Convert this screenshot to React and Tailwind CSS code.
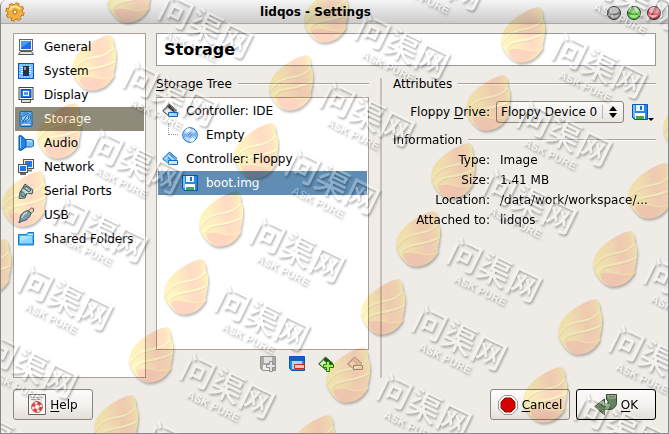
import React from "react";

function Icon({ children, className = "h-4 w-4", viewBox = "0 0 16 16" }) {
  return (
    <svg className={`shrink-0 ${className}`} viewBox={viewBox} fill="none" aria-hidden="true">
      {children}
    </svg>
  );
}

const GeneralIcon = () => (
  <Icon>
    <rect x="1.5" y=".5" width="13" height="11" fill="#f5f5f5" stroke="#666" />
    <rect x="3" y="2" width="10" height="8" fill="#1c6fe0" />
    <path d="M3 2h10L3 9z" fill="#4b98f0" />
    <path d="M2.5 12.5h11l2 3H.5z" fill="#e3e3e3" stroke="#555" />
  </Icon>
);
const SystemIcon = () => (
  <Icon>
    <rect x=".5" y=".5" width="15" height="15" fill="#5fb3fb" stroke="#0d55b0" />
    <path d="M2 2h12v12H2z" fill="none" stroke="#b9e2ff" strokeDasharray="2 1" />
    <path d="M5 3h6v10H5z" fill="#273246" />
    <path d="M3 4.5h2M3 6.5h2M3 8.5h2M3 10.5h2M11 4.5h2M11 6.5h2M11 8.5h2M11 10.5h2" stroke="#fff" />
    <path d="M6 4h2v3H6z" fill="#8798b8" />
  </Icon>
);
const DisplayIcon = () => (
  <Icon>
    <rect x="1" y=".5" width="14" height="12" fill="#fff" stroke="#444" />
    <rect x="3" y="2.5" width="10" height="8" fill="#2775e5" stroke="#0d4fb0" />
    <rect x="5.5" y="4.5" width="5" height="4" fill="#4b9cf5" stroke="#fff" />
    <path d="M3.5 13v2.5h9V13" fill="#ddd" stroke="#555" />
  </Icon>
);
const StorageIcon = () => (
  <Icon>
    <rect x="2" y=".5" width="12" height="15" rx="1" fill="#5eacf0" stroke="#1c5fa6" />
    <circle cx="8" cy="6.5" r="4.5" fill="#9bd2ff" stroke="#2670ba" />
    <path d="M8.5 5 4 12.5M5 6c0-3 6-3 6 0s-3 3-4 4" stroke="#174f8e" />
    <path d="M4 13.5h8" stroke="#d7efff" />
  </Icon>
);
const AudioIcon = () => (
  <Icon>
    <path d="M1 .8h2.5L8 5v7l-4.5 3.2H1z" fill="#2383e8" stroke="#0a4c9b" />
    <path d="M2.5 2v11" stroke="#8bd0ff" />
    <path d="M8 4.5h5.5l2 1v5.5l-2 1H8z" fill="#77bffb" stroke="#2469af" />
    <path d="M9 6h5" stroke="#e0f4ff" />
  </Icon>
);
const NetworkIcon = () => (
  <Icon>
    <rect x="5.5" y=".5" width="10" height="9" fill="#eee" stroke="#555" />
    <rect x="7" y="2" width="7" height="6" fill="#2378e8" />
    <path d="M10 11.5h4" stroke="#777" strokeWidth="2" />
    <rect x=".5" y="5.5" width="9" height="8" fill="#eee" stroke="#555" />
    <rect x="2" y="7" width="6" height="5" fill="#2378e8" />
    <path d="M2 15h6" stroke="#666" strokeWidth="2" />
  </Icon>
);
const SerialIcon = () => (
  <Icon>
    <path d="m7 1 8 6-1 4-5-1-2 5-6 .5L2 9z" fill="#bdddf2" stroke="#3c617d" />
    <path d="m8 3 5 4-2 2-6-4zM3 8l5 4-3 2-2-1z" fill="#7cbbe6" stroke="#326b99" />
    <path d="m6 7 4 3M8 5l4 3" stroke="#f4fbff" />
  </Icon>
);
const UsbIcon = () => (
  <Icon>
    <path d="m10.5 3.5 3-2.5 2 .5v2.5L13 6.5z" fill="#eee" stroke="#666" />
    <path d="M2 13c-.5-5 3-8.5 8-9.5l3 3c-2 5-5 7.5-9 7.5L2 15.5H.8z" fill="#79b6e6" stroke="#39658b" />
    <path d="M4 11c1-3 3-5 5-5.5" stroke="#d8f0ff" strokeWidth="1.5" />
  </Icon>
);
const FolderIcon = () => (
  <Icon>
    <path d="M.5 14V3.5h8l1.5-2h5.5V14z" fill="#4fb5fa" stroke="#1478cf" />
    <path d="M2 5h12v7H2z" fill="#8dd6ff" />
    <path d="M2 5h12L2 11z" fill="#aae4ff" />
    <path d="M10 3.5h5" stroke="#e1f7ff" />
  </Icon>
);

function ControllerIcon({ dark, light, edge, mark, faded }) {
  return (
    <Icon className={faded ? "h-4 w-4 opacity-60" : "h-4 w-4"}>
      <path d="M7.5 1 15 7.5 8 14 .7 8z" fill={light} stroke={dark} />
      <path d="m7.5 1.5 7 6-3 1.5-6-5z" fill={faded ? light : dark} />
      <path d="m2.5 8 3-3 3 3-3 3z" fill="#fff" opacity=".75" />
      {mark === "plus" ? (
        <path d="M8.5 5.5h3v3h4v3h-4v4h-3v-4h-3v-3h3z" fill="#a4f060" stroke="#227a0a" />
      ) : (
        <path d="M6.5 9.5h9v4h-9z" fill={mark} stroke={edge} />
      )}
    </Icon>
  );
}

function FloppyIcon({ variant = "save" }) {
  if (variant === "add") {
    return (
      <Icon>
        <path d="M.5.5h15v14H2.5l-2-2z" fill="#a9a9a9" stroke="#959595" />
        <path d="M4 1h8v6H4z" fill="#e2e2e2" />
        <path d="M3 9h6v5H3z" fill="#eee" />
        <path d="M9.5 5.5h3v3h3v3h-3v4h-3v-4h-3v-3h3z" fill="#e4e4e4" stroke="#8f8f8f" />
      </Icon>
    );
  }
  if (variant === "remove") {
    return (
      <Icon>
        <path d="M.5.5h15v14H2.5l-2-2z" fill="#2586e8" stroke="#0c55ad" />
        <path d="M1 1h14v4H1z" fill="#1260be" />
        <path d="M3 5h10v8H3z" fill="#a4dcff" />
        <path d="M5.5 8.5h10v4h-10z" fill="#ffc6a4" stroke="#c92b16" />
      </Icon>
    );
  }
  return (
    <Icon>
      <path d="M.5.5h15v15h-13l-2-2z" fill="#2586e8" stroke="#0c55ad" />
      <path d="M1 1h2v12H1z" fill="#74bfff" />
      <path d="M4 1h8v6H4z" fill="#e9f5ff" />
      <path d="M8 2h2v4H8z" fill="#1c70c8" />
      <path d="M3 9h10v6H3z" fill="#fff" />
      <path d="M4 12h8v3H4z" fill="#45ad35" />
    </Icon>
  );
}

const DiscIcon = () => (
  <Icon>
    <circle cx="8" cy="8" r="7.3" fill="#b9dcff" stroke="#1766bb" />
    <path d="M8 8 3 3a7 7 0 0 1 5-2zM8 8l5 5a7 7 0 0 1-5 2z" fill="#f3f8ff" />
    <path d="M8 8 14 5v5zM8 8 2 6v5z" fill="#75b8f5" />
    <circle cx="8" cy="8" r="3" fill="#c9c0f5" stroke="#6bbdee" />
    <circle cx="8" cy="8" r="1.3" fill="#fff" stroke="#3472c0" />
  </Icon>
);

const IdeIcon = () => <ControllerIcon dark="#444" light="#c8c8c8" edge="#1267b8" mark="#a4dcff" />;
const FloppyControllerIcon = () => (
  <Icon>
    <path d="M7.5 1 15 7.5 8 14 .7 8z" fill="#85c8f6" stroke="#1768b8" />
    <path d="m7.5 3 5 4.5M5 5.5l5 4.5" stroke="#1768b8" />
    <path d="m6.5 4.500 5 4M3 8l3-2.500" stroke="#e6f6ff" />
    <path d="M6.5 9.500h9v4h-9z" fill="#c4eaff" stroke="#1768b8" />
  </Icon>
);

const categories = [
  ["General", GeneralIcon],
  ["System", SystemIcon],
  ["Display", DisplayIcon],
  ["Storage", StorageIcon],
  ["Audio", AudioIcon],
  ["Network", NetworkIcon],
  ["Serial Ports", SerialIcon],
  ["USB", UsbIcon],
  ["Shared Folders", FolderIcon],
];

function GroupTitle({ children }) {
  return (
    <h2 className="flex h-5 items-center gap-1.5 whitespace-nowrap">
      <span>{children}</span>
      <span className="h-0.5 flex-1 border-t border-[#aaa39e] bg-white" />
    </h2>
  );
}

function TreeRow({ icon: RowIcon, label, child, selected }) {
  return (
    <li role="treeitem" aria-level={child ? 2 : 1} aria-selected={!!selected}>
      <div className={`flex h-6 items-center gap-2 pl-1 ${selected ? "bg-[#618db4] text-white" : ""}`}>
        {child && (
          <span className="-mr-1 ml-1.5 h-3 w-2.5 self-start border-b border-l border-dotted border-[#999]" />
        )}
        <RowIcon />
        <span>{label}</span>
      </div>
    </li>
  );
}

function DialogButton({ children, isDefault }) {
  return (
    <button
      type="button"
      className={`flex h-[31px] w-20 items-center justify-center gap-1 rounded-[3px] border bg-linear-to-b from-[#fcfbfa] via-[#f4f2ef] to-[#e4dfd9] ${
        isDefault ? "border-black" : "border-[#8c8782]"
      }`}
    >
      {children}
    </button>
  );
}

const windowButtons = [
  ["Minimize", "#7c7c7c", "#c5c5c5"],
  ["Maximize", "#45b82a", "#a2ec86"],
  ["Close", "#d03b48", "#f59a9a"],
];

function TitleBar() {
  return (
    <header className="flex h-6 shrink-0 items-center rounded-t-md border-b border-[#aaa] bg-linear-to-b from-[#f5f5f5] to-[#cbcbcb] px-1">
      <Icon className="h-5 w-5" viewBox="0 0 20 20">
        <circle cx="10" cy="10" r="7.5" stroke="#a96808" strokeWidth="4" strokeDasharray="3.4 2.5" />
        <circle cx="10" cy="10" r="7.500" fill="#f0b040" stroke="#b87410" />
        <circle cx="10" cy="10" r="7.5" stroke="#f0b040" strokeWidth="2.500" strokeDasharray="3 2.9" />
        <path d="M5 8c1-4 7-5 10-1" stroke="#ffe5a3" strokeWidth="2" />
        <circle cx="10" cy="10" r="2" fill="#fff5db" stroke="#a56a17" />
      </Icon>
      <h1 className="flex-1 text-center font-bold">lidqos - Settings</h1>
      <div className="flex justify-end gap-1 pr-0.5 pt-0.5">
        {windowButtons.map(([label, dark, light]) => (
          <button key={label} type="button" aria-label={label}>
            <Icon viewBox="0 0 16 16">
              <circle cx="8" cy="8" r="6.6" fill={dark} stroke="#444" />
              <path d="M3 9.5c3 1 7 1 10 0a5.4 5.4 0 0 1-10 0z" fill={light} />
              <ellipse cx="8" cy="5.2" rx="4.8" ry="3.2" fill="#fff" opacity=".5" />
            </Icon>
          </button>
        ))}
      </div>
    </header>
  );
}

const marks = [];
for (let col = -1; col <= 3; col++) {
  for (let row = -7; row <= 6; row++) {
    const x = 185 + col * 197 - row * 35;
    const y = 288 + col * 20 + row * 68;
    if (x > -150 && x < 700 && y > -90 && y < 470) marks.push([x, y]);
  }
}

function Tiled({ href }) {
  return marks.map(([x, y]) => <use key={`${x},${y}`} href={href} x={x} y={y} />);
}

function Watermark() {
  return (
    <>
      <svg className="pointer-events-none absolute inset-0 h-full w-full mix-blend-multiply" aria-hidden="true">
        <defs>
          <linearGradient id="flame" x1="0" y1=".6" x2="1" y2=".4">
            <stop offset="0" stopColor="#ffe94a" />
            <stop offset=".3" stopColor="#ffd556" />
            <stop offset=".65" stopColor="#ffa066" />
            <stop offset=".88" stopColor="#ffb860" />
            <stop offset="1" stopColor="#ffe840" />
          </linearGradient>
          <linearGradient id="ember" x1="0" y1=".3" x2="1" y2=".6">
            <stop offset="0" stopColor="#ff9560" />
            <stop offset=".6" stopColor="#f8915c" />
            <stop offset="1" stopColor="#ffd048" />
          </linearGradient>
          <filter id="soft" x="-20%" y="-20%" width="150%" height="150%">
            <feGaussianBlur stdDeviation="1" />
          </filter>
          <path
            id="shape"
            d="M16-29C6-28-10-18-17-9-23-1-23 8-19 14-14 22-9 26-3 26.5 8 27 16 20 20 12 19 8 22 2 21.5-1.5 23-8 22-14 20-17 20-23 19-26 16-29z"
          />
          <g id="letters" transform="translate(76 31) rotate(26)" textAnchor="middle">
            <text y="11" className="font-['Noto_Sans_CJK_SC',sans-serif] text-[33px] font-medium">
              问渠网
            </text>
            <text x="-4" y="27" className="font-['Liberation_Sans',sans-serif] text-[11px] font-bold">
              ASK PURE
            </text>
          </g>
          <mask id="outside" maskUnits="userSpaceOnUse" x="-30" y="-35" width="190" height="140">
            <path d="M-30-35h190v140H-30z" fill="#fff" />
            <use href="#shape" fill="#000" />
            <use href="#letters" fill="#000" />
          </mask>
          <g id="mark">
            <g mask="url(#outside)">
              <use href="#shape" x="1" y="2" fill="#555" opacity=".4" filter="url(#soft)" />
              <use href="#letters" x="1" y="2" fill="#444" opacity=".4" filter="url(#soft)" />
            </g>
            <g opacity=".38">
              <use href="#shape" fill="url(#flame)" />
              <path d="M-15 14C-10 11-4 12 4 14 11 15 17 14 20 12 16 20 8 27-3 26.5-9 26-14 20-15 14z" fill="url(#ember)" />
              <path d="M-21 8C-16-3-8-5 2-7 10-8 17-12 20-17M-18 13C-16 5-5 5 5 3 13 1 19-1 21.5-3" stroke="#fff27a" strokeWidth="2" fill="none" />
              <path d="M-21 9.5C-16-1-8-4 2-5.5 10-7 17-11 20.5-15M-15 14C-12 7-5 7 5 5 13 3 18 1 21-1" stroke="#c07848" strokeWidth=".8" fill="none" opacity=".7" />
              <path d="M-15 14C-10 11-4 12 4 14 11 15 17 14 20 12" stroke="#ffe650" strokeWidth="1" fill="none" />
            </g>
          </g>
        </defs>
        <Tiled href="#mark" />
      </svg>
      <svg
        className="pointer-events-none absolute inset-0 h-full w-full fill-white opacity-70 mix-blend-soft-light"
        aria-hidden="true"
      >
        <Tiled href="#letters" />
      </svg>
    </>
  );
}

const details = [
  ["Type:", "Image"],
  ["Size:", "1.41 MB"],
  ["Location:", "/data/work/workspace/..."],
  ["Attached to:", "lidqos"],
];

export default function App() {
  return (
    <div className="relative isolate flex min-h-screen flex-col overflow-hidden rounded-t-md border-x border-b border-[#888] bg-[#efebe7] font-['DejaVu_Sans',sans-serif] text-xs text-black">
      <TitleBar />
      <div className="flex flex-1 gap-2.5 px-3 pt-[9px]">
        <nav className="w-[133px] shrink-0 border border-[#aaa19a] bg-white p-px">
          <ul>
            {categories.map(([label, CategoryIcon]) => {
              const active = label === "Storage";
              return (
                <li key={label}>
                  <button
                    type="button"
                    aria-current={active ? "page" : undefined}
                    className={`flex h-6 w-full items-center gap-2.5 whitespace-nowrap pl-[3px] ${
                      active ? "bg-[#8f8b7b] text-white" : ""
                    }`}
                  >
                    <CategoryIcon />
                    {label}
                  </button>
                </li>
              );
            })}
          </ul>
        </nav>

        <main className="flex min-w-0 flex-1 flex-col">
          <div className="flex h-[33px] items-center border border-[#999] bg-white px-[7px] text-base font-bold">
            Storage
          </div>
          <div className="mt-2 grid flex-1 grid-cols-[213fr_2px_263fr] gap-x-[11px]">
            <section className="flex min-w-0 flex-col">
              <GroupTitle>
                <u className="underline-offset-2">S</u>torage Tree
              </GroupTitle>
              <ul role="tree" aria-label="Storage Tree" className="mt-[3px] flex-1 border border-[#aaa19a] bg-white p-px">
                <TreeRow icon={IdeIcon} label="Controller: IDE" />
                <TreeRow icon={DiscIcon} label="Empty" child />
                <TreeRow icon={FloppyControllerIcon} label="Controller: Floppy" />
                <TreeRow icon={FloppyIcon} label="boot.img" child selected />
              </ul>
              <div className="flex h-7 items-center justify-end gap-[13px] pr-1.5">
                <button type="button" aria-label="Add attachment" disabled>
                  <FloppyIcon variant="add" />
                </button>
                <button type="button" aria-label="Remove attachment">
                  <FloppyIcon variant="remove" />
                </button>
                <button type="button" aria-label="Add controller">
                  <ControllerIcon dark="#28481b" light="#8edb62" mark="plus" />
                </button>
                <button type="button" aria-label="Remove controller" disabled>
                  <ControllerIcon dark="#6f5f56" light="#cfc2b8" edge="#6f5f56" mark="#f1e9e2" faded />
                </button>
              </div>
            </section>
            <div className="mt-1 border-l-2 border-[#c5c0bb]" />
            <section className="min-w-0">
              <GroupTitle>Attributes</GroupTitle>
              <div className="mt-[7px] grid grid-cols-[97px_1fr_26px] items-center gap-x-1.5">
                <label htmlFor="drive" className="whitespace-nowrap text-right">
                  Floppy <u className="underline-offset-2">D</u>rive:
                </label>
                <div className="relative">
                  <select
                    id="drive"
                    className="block h-[22px] w-full appearance-none rounded-[3px] border border-[#8c8782] bg-linear-to-b from-[#fcfbfa] to-[#e8e4df] pl-1 pr-5"
                  >
                    <option>Floppy Device 0</option>
                  </select>
                  <svg className="pointer-events-none absolute right-1 top-1 h-3.5 w-[18px]" viewBox="0 0 18 14" aria-hidden="true">
                    <path d="M.5 0v14" stroke="#bbb5af" />
                    <path d="m11 1 4 5H7zM7 8h8l-4 5z" fill="#000" />
                  </svg>
                </div>
                <button type="button" aria-label="Choose disk" className="flex h-5 items-center pl-0.5">
                  <FloppyIcon />
                  <svg className="h-1 w-1.5 self-end" viewBox="0 0 6 4" aria-hidden="true">
                    <path d="M0 0h6L3 3z" fill="#000" />
                  </svg>
                </button>
              </div>
              <div className="mt-[7px]">
                <GroupTitle>Information</GroupTitle>
              </div>
              <dl className="grid grid-cols-[97px_1fr] gap-x-2.5 leading-5">
                {details.map(([term, value]) => (
                  <React.Fragment key={term}>
                    <dt className="text-right">{term}</dt>
                    <dd className="whitespace-nowrap">{value}</dd>
                  </React.Fragment>
                ))}
              </dl>
            </section>
          </div>
        </main>
      </div>

      <footer className="flex gap-1.5 px-3 pb-[13px] pt-[11px]">
        <DialogButton>
          <Icon className="h-[21px] w-[18px]" viewBox="0 0 18 21">
            <path d="M.5.5h17v20H.5z" fill="#f8f8f6" stroke="#666" />
            <path d="M3 3.5h11M3 5.5h9" stroke="#aaa" />
            <circle cx="9" cy="13" r="4" stroke="#eee" strokeWidth="3" />
            <circle cx="9" cy="13" r="4" stroke="#d33" strokeWidth="2.5" strokeDasharray="3.5 2.78" />
            <circle cx="9" cy="13" r="5.5" stroke="#c44" strokeWidth=".8" />
            <circle cx="9" cy="13" r="2.5" stroke="#c44" strokeWidth=".6" />
          </Icon>
          <span><u className="underline-offset-2">H</u>elp</span>
        </DialogButton>
        <span className="flex-1" />
        <DialogButton>
          <Icon className="h-5 w-5" viewBox="0 0 20 20">
            <path d="M6 .5h8L19.5 6v8L14 19.5H6L.5 14V6z" fill="#fff" stroke="#999" />
            <path d="M7 3h6l4 4v6l-4 4H7l-4-4V7z" fill="#d40000" stroke="#a00000" />
          </Icon>
          <span><u className="underline-offset-2">C</u>ancel</span>
        </DialogButton>
        <DialogButton isDefault>
          <Icon className="h-[23px] w-[23px]" viewBox="0 0 23 23">
            <path d="M12.5 1.5h10v8c0 4-3 7-7 7h-5V22L.8 13.5l9.7-7.5v5h3.5V8l-1.5-1.5z" fill="#66835f" stroke="#35482f" />
            <path d="M13.5 2.5h8V5h-7zM3 13l6.5-5v4h5" stroke="#a1b596" />
          </Icon>
          <span><u className="underline-offset-2">O</u>K</span>
        </DialogButton>
      </footer>
      <Watermark />
    </div>
  );
}
